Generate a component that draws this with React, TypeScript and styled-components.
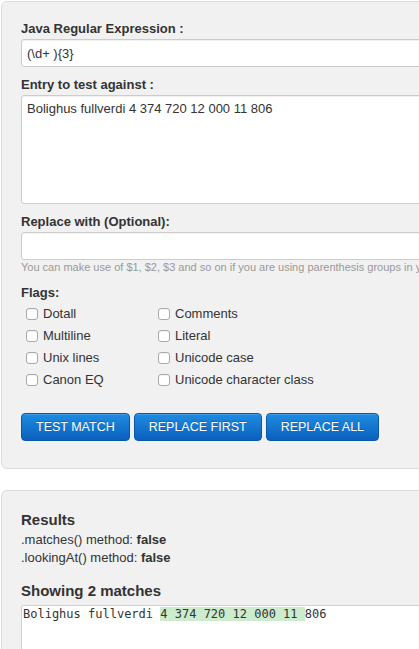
import { ReactNode } from "react";
import { createGlobalStyle, styled } from "styled-components";

const GlobalStyle = createGlobalStyle`
  html, body {
    margin: 0;
    padding: 0;
    overflow: hidden;
    background: #ffffff;
  }

  body {
    font-family: "Liberation Sans", Arial, Helvetica, sans-serif;
    font-size: 13px;
    color: #333333;
  }
`;

const flags: [string, string][] = [
  ["Dotall", "Comments"],
  ["Multiline", "Literal"],
  ["Unix lines", "Unicode case"],
  ["Canon EQ", "Unicode character class"],
];

const sample = "Bolighus fullverdi 4 374 720 12 000 11 806";

export default function App() {
  return (
    <>
      <GlobalStyle />
      <Page>
        <Panel $bottom={27}>
          <FieldLabel>Java Regular Expression :</FieldLabel>
          <TextInput defaultValue="(\d+ ){3}" />

          <FieldLabel>Entry to test against :</FieldLabel>
          <TextArea defaultValue={sample} />

          <FieldLabel>Replace with (Optional):</FieldLabel>
          <TextInput defaultValue="" $spaced={false} />
          <Hint>
            You can make use of $1, $2, $3 and so on if you are using parenthesis groups in your
            regular expression.
          </Hint>

          <FlagsLabel>Flags:</FlagsLabel>
          <FlagGrid>
            {flags.map(([left, right]) => (
              <FlagRow key={left}>
                <Flag label={left} />
                <Flag label={right} />
              </FlagRow>
            ))}
          </FlagGrid>

          <Buttons>
            <Button>TEST MATCH</Button>
            <Button>REPLACE FIRST</Button>
            <Button>REPLACE ALL</Button>
          </Buttons>
        </Panel>

        <Panel $bottom={40}>
          <Heading>Results</Heading>
          <ResultLine>
            .matches() method: <b>false</b>
          </ResultLine>
          <ResultLine>
            .lookingAt() method: <b>false</b>
          </ResultLine>

          <Heading $gap={13}>Showing 2 matches</Heading>
          <MatchBox>
            Bolighus fullverdi <Match>4 374 720 12 000 11 </Match>806
          </MatchBox>
        </Panel>
      </Page>
    </>
  );
}

function Flag({ label }: { label: ReactNode }) {
  return (
    <FlagItem>
      <CheckBox type="checkbox" />
      <span>{label}</span>
    </FlagItem>
  );
}

const Page = styled.div`
  width: 720px;
  padding: 1px 0 0 1px;
  display: flex;
  flex-flow: column;
  gap: 21px;
`;

const Panel = styled.section<{ $bottom: number }>`
  display: flex;
  flex-flow: column;
  align-items: stretch;
  padding: 18px 19px ${(p) => p.$bottom}px;
  background: #f1f1f1;
  border: 1px solid #dcdcdc;
  border-radius: 6px;
`;

const FieldLabel = styled.label`
  display: block;
  font-weight: bold;
  font-size: 13px;
  line-height: 18px;
  margin-bottom: 1px;
`;

const TextInput = styled.input<{ $spaced?: boolean }>`
  box-sizing: border-box;
  height: 28px;
  margin: 0 0 ${(p) => (p.$spaced === false ? 0 : 9)}px;
  padding: 0 5px;
  font: 13px "Liberation Sans", Arial, sans-serif;
  color: #333333;
  background: #ffffff;
  border: 1px solid #cccccc;
  border-radius: 3px;
  box-shadow: inset 0 1px 1px rgba(0, 0, 0, 0.06);
  outline: none;
`;

const TextArea = styled.textarea`
  box-sizing: border-box;
  height: 109px;
  margin: 0 0 9px;
  padding: 4px 5px 2px;
  font: 13px/18px "Liberation Sans", Arial, sans-serif;
  color: #333333;
  background: #ffffff;
  border: 1px solid #cccccc;
  border-radius: 3px;
  box-shadow: inset 0 1px 1px rgba(0, 0, 0, 0.06);
  resize: none;
  outline: none;
`;

const Hint = styled.div`
  font-size: 11px;
  line-height: 15px;
  color: #999999;
  white-space: nowrap;
`;

const FlagsLabel = styled.div`
  margin-top: 8px;
  font-weight: bold;
  font-size: 13px;
  line-height: 20px;
`;

const FlagGrid = styled.div`
  display: flex;
  flex-flow: column;
  padding-left: 5px;
`;

const FlagRow = styled.div`
  display: grid;
  grid-template-columns: 132px 1fr;
`;

const FlagItem = styled.label`
  display: flex;
  align-items: center;
  gap: 5px;
  height: 22px;
  font-size: 13px;
  line-height: 22px;
`;

const CheckBox = styled.input`
  appearance: none;
  box-sizing: border-box;
  width: 12px;
  height: 12px;
  margin: 0;
  background: #ffffff;
  border: 1px solid #a9a9a9;
  border-radius: 3px;
  box-shadow: inset 0 1px 1px rgba(0, 0, 0, 0.05);
`;

const Buttons = styled.div`
  display: flex;
  gap: 4px;
  margin-top: 22px;
`;

const Button = styled.button`
  height: 28px;
  padding: 0 14px;
  font: 12.5px "Liberation Sans", Arial, sans-serif;
  color: #ffffff;
  text-shadow: 0 -1px 0 rgba(0, 0, 0, 0.2);
  background: linear-gradient(to bottom, #1f8ce2, #0a60bd);
  border: 1px solid #0a56a9;
  border-radius: 4px;
  box-shadow: inset 0 1px 0 rgba(255, 255, 255, 0.15);
  cursor: pointer;
`;

const Heading = styled.div<{ $gap?: number }>`
  margin-top: ${(p) => p.$gap ?? 0}px;
  font-weight: bold;
  font-size: 15px;
  line-height: 22px;
`;

const ResultLine = styled.div`
  font-size: 13px;
  line-height: 18px;

  b {
    font-weight: bold;
  }
`;

const MatchBox = styled.pre`
  margin: 3px 0 0;
  min-height: 100px;
  padding: 1px 1px;
  font: 12px/15px "DejaVu Sans Mono", Menlo, monospace;
  color: #333333;
  background: #ffffff;
  border: 1px solid #d0d0d0;
  border-radius: 2px;
`;

const Match = styled.span`
  background: #cdebcd;
`;
